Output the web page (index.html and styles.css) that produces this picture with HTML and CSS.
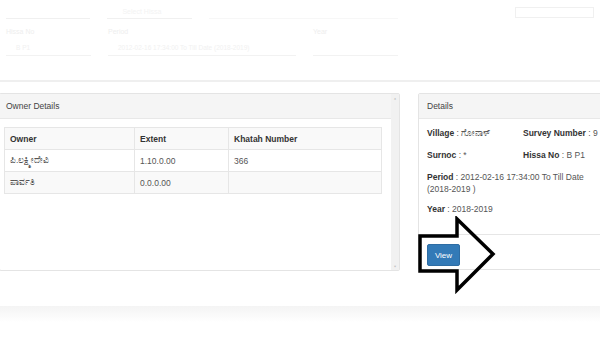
FILE: index.html
```html
<!DOCTYPE html>
<html lang="kn">
<head>
  <meta charset="UTF-8">
  <title>RTC Details</title>
  <link rel="stylesheet" href="styles.css">
</head>
<body>

  <div class="search">
    <div class="row row-top">
      <div class="field w85"><span class="line"></span></div>
      <div class="field w85"><span class="hint">Select Hissa</span><span class="line"></span></div>
      <div class="field w190"><span class="line faint"></span></div>
      <div class="field w80"><span class="box"></span></div>
    </div>
    <div class="row">
      <div class="field w85"><label>Hissa No</label><span class="input">B P1</span></div>
      <div class="field w188"><label>Period</label><span class="input">2012-02-16 17:34:00 To Till Date (2018-2019)</span></div>
      <div class="field w85"><label>Year</label><span class="input"></span></div>
      <div class="field w85"><label>&nbsp;</label><span class="input blank"></span></div>
    </div>
  </div>

  <div class="content">
    <div class="panel owner">
      <div class="owner-main">
        <div class="panel-heading">Owner Details</div>
        <div class="panel-body">
          <table class="grid">
            <tr><th class="c1">Owner</th><th class="c2">Extent</th><th>Khatah Number</th></tr>
            <tr><td>ಪಿ.ಲಕ್ಷ್ಮೀದೇವಿ</td><td>1.10.0.00</td><td>366</td></tr>
            <tr><td>ಪಾರ್ವತಿ</td><td>0.0.0.00</td><td></td></tr>
          </table>
        </div>
      </div>
      <div class="scrollbar"><span>&#9652;</span><span>&#9662;</span></div>
    </div>

    <div class="panel details">
      <div class="panel-heading">Details</div>
      <div class="panel-body info">
        <div class="pair">
          <p><b>Village</b> : ಗೋನಾಳ್</p>
          <p><b>Survey Number</b> : 9</p>
        </div>
        <div class="pair">
          <p><b>Surnoc</b> : *</p>
          <p><b>Hissa No</b> : B P1</p>
        </div>
        <p class="wide"><b>Period</b> : 2012-02-16 17:34:00 To Till Date<br>(2018-2019 )</p>
        <p><b>Year</b> : 2018-2019</p>
      </div>
      <div class="panel-footer">
        <button class="btn">View</button>
      </div>
    </div>
  </div>

  <div class="foot"></div>

  <svg class="arrow" width="84" height="80" viewBox="0 0 84 80">
    <path d="M2 20 H39 V3 L75 38 L39 74 V55 H2 Z" fill="none" stroke="#000" stroke-width="3.5" stroke-linejoin="miter"/>
  </svg>

</body>
</html>
```

FILE: styles.css
```css
body {
  margin: 0;
  background: #fff;
  color: #333;
  font-family: "Liberation Sans", Arial, sans-serif;
  font-size: 8.5px;
  width: 600px;
  height: 337px;
  overflow: hidden;
  position: relative;
}

.search {
  height: 82px;
  border-bottom: 2px solid #efefef;
  padding: 0 6px;
  box-sizing: border-box;
}

.row {
  display: flex;
  gap: 17px;
}

.row-top {
  height: 24px;
  align-items: flex-end;
}

.field {
  display: flex;
  flex-direction: column;
}

.w85 { width: 85px; }
.w80 { width: 80px; margin-left: 100px; }
.w188 { width: 188px; }
.w190 { width: 190px; }

.line {
  height: 1px;
  background: #f0f0f0;
  margin-bottom: 5px;
}

.line.faint {
  background: #f7f7f7;
}

.hint {
  color: #f3f3f3;
  font-size: 7px;
  margin-bottom: 3px;
  padding-left: 15px;
}

.box {
  height: 9px;
  border: 1px solid #f0f0f0;
  margin-bottom: 6px;
}

.field label {
  color: #eeeeee;
  font-size: 7px;
  margin: 4px 0 6px;
}

.input {
  height: 15px;
  border-bottom: 1px solid #f2f2f2;
  color: #f1f1f1;
  font-size: 6.5px;
  padding: 3px 10px 0;
  box-sizing: border-box;
  white-space: nowrap;
  overflow: hidden;
}

.input.blank {
  border-bottom: none;
}

.content {
  display: flex;
  gap: 18px;
  width: 630px;
  margin-top: 11px;
  align-items: flex-start;
}

.panel {
  border: 1px solid #e4e4e4;
  border-radius: 2px;
  background: #fff;
  box-sizing: border-box;
}

.owner {
  width: 401px;
  height: 178px;
  display: flex;
  margin-left: -1px;
}

.owner-main {
  flex: 1;
}

.scrollbar {
  width: 8px;
  background: #f1f1f1;
  display: flex;
  flex-direction: column;
  justify-content: space-between;
  align-items: center;
  color: #bbb;
  font-size: 5px;
  line-height: 8px;
}

.panel-heading {
  background: #f5f5f5;
  border-bottom: 1px solid #e8e8e8;
  height: 24px;
  line-height: 24px;
  padding-left: 6px;
  color: #444;
}

.details .panel-heading {
  padding-left: 8px;
}

.owner .panel-body {
  padding: 8px 8px 0 4px;
}

.grid {
  width: 378px;
  border-collapse: collapse;
}

.grid th,
.grid td {
  border: 1px solid #e6e6e6;
  height: 21px;
  padding: 0 5px;
  text-align: left;
}

.grid th {
  font-weight: bold;
  color: #333;
  background: #f9f9f9;
}

.grid td {
  color: #555;
}

.grid tr:nth-child(3) td {
  background: #f9f9f9;
}

.grid .c1 { width: 119px; }
.grid .c2 { width: 83px; }

.details {
  width: 210px;
  height: 177px;
}

.info {
  padding: 8px 8px 0;
  height: 116px;
  box-sizing: border-box;
  border-bottom: 1px solid #e6e6e6;
}

.info p {
  margin: 0 0 10px;
  color: #555;
  line-height: 12px;
}

.info b {
  color: #333;
}

.info .wide {
  width: 170px;
  margin-bottom: 8px;
}

.pair {
  display: flex;
}

.pair p {
  width: 97px;
}

.panel-footer {
  padding: 9px 8px;
}

.btn {
  background: #337ab7;
  color: #fff;
  border: 1px solid #2e6da4;
  border-radius: 2px;
  font-family: inherit;
  font-size: 8px;
  width: 33px;
  height: 22px;
  padding: 0;
}

.foot {
  margin-top: 35px;
  height: 16px;
  background: linear-gradient(#efefef, #f8f8f8 60%, #fff);
  opacity: 0.7;
}

.arrow {
  position: absolute;
  left: 418px;
  top: 216px;
}
```
